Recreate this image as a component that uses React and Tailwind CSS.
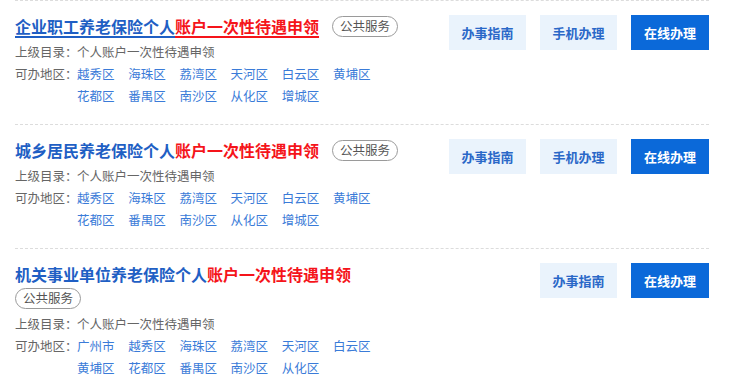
const items = [
  {
    blue: '企业职工养老保险个人',
    red: '账户一次性待遇申领',
    hover: true,
    mobile: true,
    areas: ['越秀区', '海珠区', '荔湾区', '天河区', '白云区', '黄埔区', '花都区', '番禺区', '南沙区', '从化区', '增城区'],
  },
  {
    blue: '城乡居民养老保险个人',
    red: '账户一次性待遇申领',
    mobile: true,
    areas: ['越秀区', '海珠区', '荔湾区', '天河区', '白云区', '黄埔区', '花都区', '番禺区', '南沙区', '从化区', '增城区'],
  },
  {
    blue: '机关事业单位养老保险个人',
    red: '账户一次性待遇申领',
    mobile: false,
    areas: ['广州市', '越秀区', '海珠区', '荔湾区', '天河区', '白云区', '黄埔区', '花都区', '番禺区', '南沙区', '从化区'],
  },
];

function Item({ item }) {
  const line = item.hover ? ' underline decoration-2 underline-offset-[3px]' : '';
  return (
    <div className="flex border-t border-dashed border-[#dcdcdc] pt-[14px] pb-[17px]">
      <div className="w-[405px]">
        <div className="flex flex-wrap items-center gap-y-[3px]">
          <a className="mr-[13px] text-[16px] font-bold leading-[22px]">
            <span className={'text-[#1f5fc4] decoration-[#1f5fc4]' + line}>{item.blue}</span>
            <span className={'text-[#f5141a] decoration-[#f5141a]' + line}>{item.red}</span>
          </a>
          <span className="flex h-[21px] items-center rounded-full border border-[#9a9a9a] px-[7px] text-[12.5px] text-[#555]">
            公共服务
          </span>
        </div>
        <div className="mt-[4px] flex whitespace-nowrap text-[12.5px] leading-[22px] text-[#666]">
          <span className="w-[62px] shrink-0">上级目录：</span>
          <span>个人账户一次性待遇申领</span>
        </div>
        <div className="flex text-[12.5px] leading-[22px] text-[#666]">
          <span className="w-[62px] shrink-0 whitespace-nowrap">可办地区：</span>
          <div className="flex flex-1 flex-wrap">
            {item.areas.map((a) => (
              <a key={a} className="mr-[13.7px] whitespace-nowrap text-[#3a7bd8]">
                {a}
              </a>
            ))}
          </div>
        </div>
      </div>
      <div className="flex flex-1 justify-end gap-[14px] text-[13px] font-bold">
        <button className="h-[35px] w-[77px] bg-[#eaf3fc] text-[#2a68c8]">办事指南</button>
        {item.mobile && (
          <button className="h-[35px] w-[77px] bg-[#eaf3fc] text-[#2a68c8]">手机办理</button>
        )}
        <button className="h-[35px] w-[78px] bg-[#0b69d9] text-white">在线办理</button>
      </div>
    </div>
  );
}

export default function App() {
  return (
    <div
      className="min-h-screen bg-white pl-[15px] pr-[25px]"
      style={{ fontFamily: '"Noto Sans CJK SC", "Noto Sans", sans-serif' }}
    >
      {items.map((item, i) => (
        <Item key={i} item={item} />
      ))}
    </div>
  );
}
